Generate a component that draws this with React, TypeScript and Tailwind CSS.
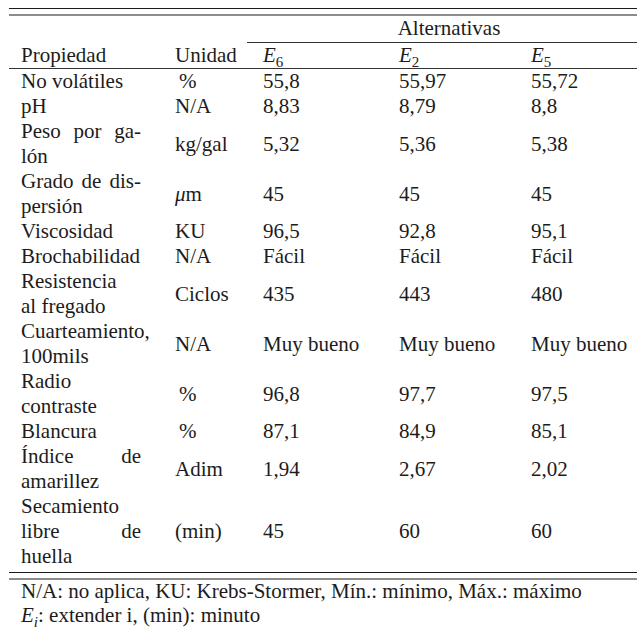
const serif = { fontFamily: '"Liberation Serif", "Times New Roman", serif' };

type Line = { words: string[]; justify?: boolean };
type Row = { prop: Line[]; unit: React.ReactNode; vals: string[] };

const J = (...words: string[]): Line => ({ words, justify: true });
const L = (text: string): Line => ({ words: [text] });

const pct = <span className="pl-[4px]">%</span>;

const rows: Row[] = [
  { prop: [L("No volátiles")], unit: pct, vals: ["55,8", "55,97", "55,72"] },
  { prop: [L("pH")], unit: "N/A", vals: ["8,83", "8,79", "8,8"] },
  { prop: [J("Peso", "por", "ga-"), L("lón")], unit: "kg/gal", vals: ["5,32", "5,36", "5,38"] },
  {
    prop: [J("Grado", "de", "dis-"), L("persión")],
    unit: (
      <span>
        <i>μ</i>m
      </span>
    ),
    vals: ["45", "45", "45"],
  },
  { prop: [L("Viscosidad")], unit: "KU", vals: ["96,5", "92,8", "95,1"] },
  { prop: [L("Brochabilidad")], unit: "N/A", vals: ["Fácil", "Fácil", "Fácil"] },
  { prop: [L("Resistencia"), L("al fregado")], unit: "Ciclos", vals: ["435", "443", "480"] },
  { prop: [L("Cuarteamiento,"), L("100mils")], unit: "N/A", vals: ["Muy bueno", "Muy bueno", "Muy bueno"] },
  { prop: [L("Radio"), L("contraste")], unit: pct, vals: ["96,8", "97,7", "97,5"] },
  { prop: [L("Blancura")], unit: pct, vals: ["87,1", "84,9", "85,1"] },
  { prop: [J("Índice", "de"), L("amarillez")], unit: "Adim", vals: ["1,94", "2,67", "2,02"] },
  { prop: [L("Secamiento"), J("libre", "de"), L("huella")], unit: "(min)", vals: ["45", "60", "60"] },
];

// column starts: 21, 175, 263, 399, 531 (table spans x 9..637)
const cols = "grid grid-cols-[166px_88px_136px_132px_106px]";

function Sub({ children }: { children: React.ReactNode }) {
  return <span className="relative top-[5px] text-[15px] leading-none">{children}</span>;
}

function E({ n }: { n: string }) {
  return (
    <span>
      <i>E</i>
      <Sub>{n}</Sub>
    </span>
  );
}

function PropCell({ lines }: { lines: Line[] }) {
  return (
    <div className="pl-[12px]">
      {lines.map((ln, i) =>
        ln.justify ? (
          <div key={i} className="flex w-[120px] justify-between">
            {ln.words.map((w) => (
              <span key={w}>{w}</span>
            ))}
          </div>
        ) : (
          <div key={i} className="whitespace-nowrap">
            {ln.words[0]}
          </div>
        )
      )}
    </div>
  );
}

export default function App() {
  return (
    <div
      className="w-[643px] h-[631px] bg-white pt-[8px] text-[21px] leading-[25px] text-[#1c1c1c]"
      style={serif}
    >
      <div className="ml-[9px] w-[628px]">
        <div className="h-px bg-[#1a1a1a]" />
        <div className="mt-[5px] h-[2px] bg-[#8c8c8c]" />

        <div className="h-[26px] pl-[252px] text-center leading-[24px]">Alternativas</div>
        <div className="ml-[238px] h-px bg-[#333]" />

        <div className={`${cols} h-[25px] leading-[24px]`}>
          <div className="pl-[12px]">Propiedad</div>
          <div>Unidad</div>
          <div>
            <E n="6" />
          </div>
          <div>
            <E n="2" />
          </div>
          <div>
            <E n="5" />
          </div>
        </div>
        <div className="h-px bg-[#333]" />

        <div>
          {rows.map((r, i) => (
            <div key={i} className={`${cols} items-center`}>
              <PropCell lines={r.prop} />
              <div>{r.unit}</div>
              {r.vals.map((v, j) => (
                <div key={j} className="whitespace-nowrap">
                  {v}
                </div>
              ))}
            </div>
          ))}
        </div>

        <div className="mt-[3px] h-px bg-[#1a1a1a]" />
        <div className="mt-[5px] h-[2px] bg-[#8c8c8c]" />

        <div className="pl-[12px] leading-[23.5px]">
          <div className="whitespace-nowrap">
            N/A: no aplica, KU: Krebs-Stormer, Mín.: mínimo, Máx.: máximo
          </div>
          <div className="whitespace-nowrap">
            <i>E</i>
            <Sub>
              <i>i</i>
            </Sub>
            : extender i, (min): minuto
          </div>
        </div>
      </div>
    </div>
  );
}
